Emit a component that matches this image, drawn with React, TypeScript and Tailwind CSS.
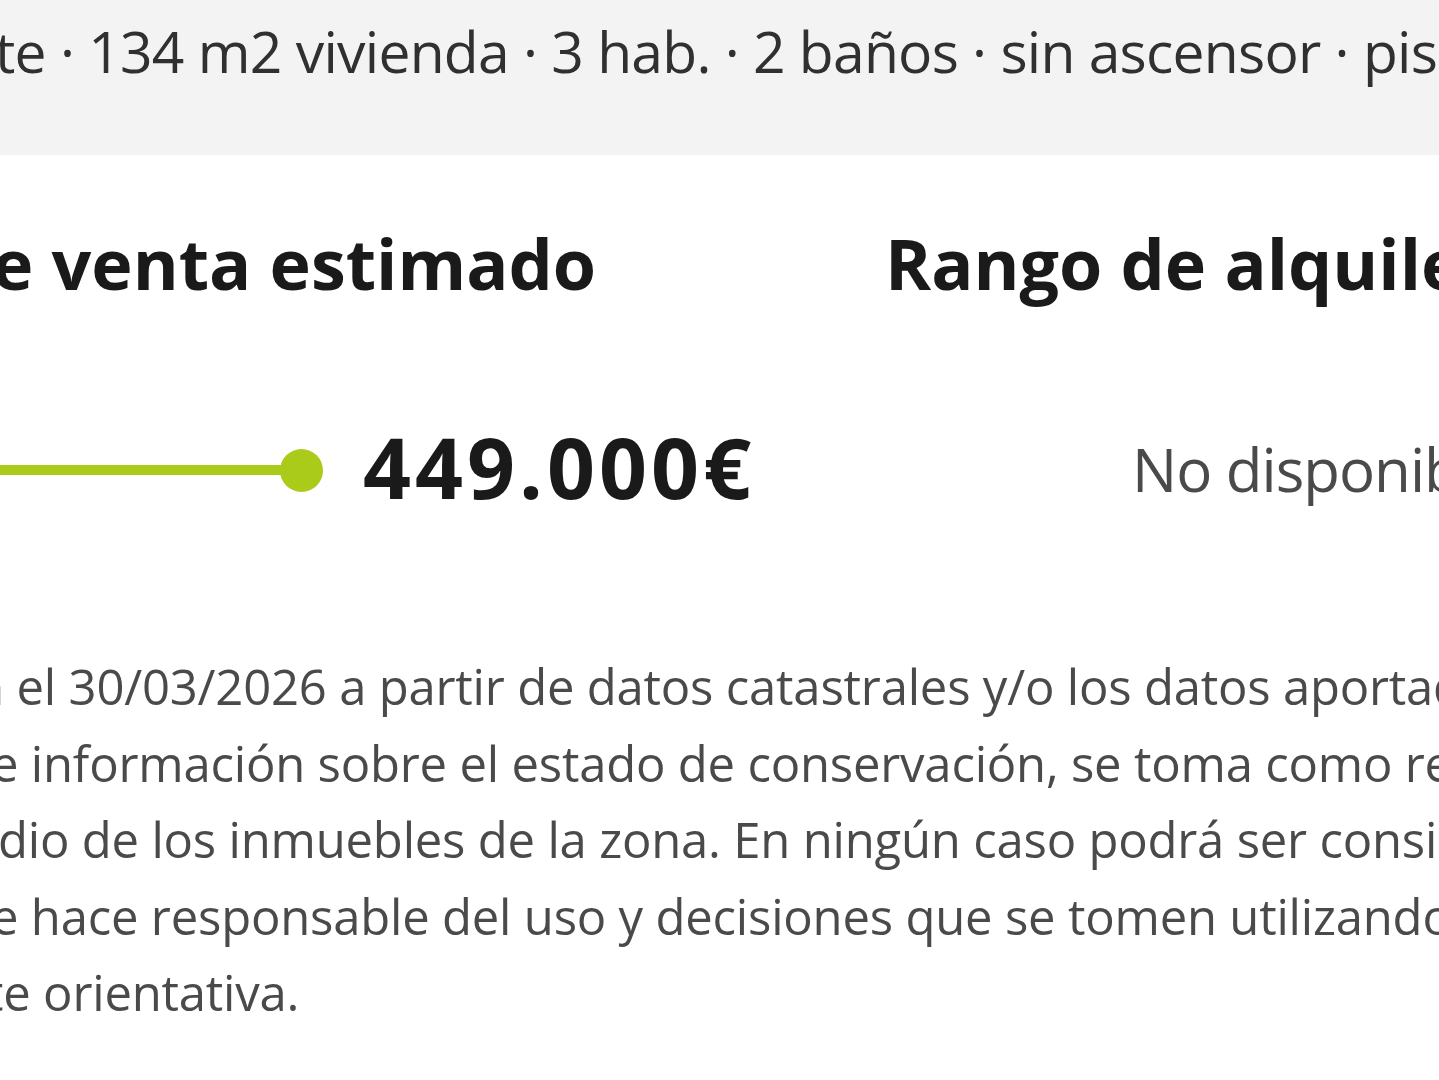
import React from "react";

const font = { fontFamily: '"Open Sans", "Noto Sans", sans-serif' };

const bodyLines = [
  { text: "a el 30/03/2026 a partir de datos catastrales y/o los datos aportados", ml: "-ml-[23px]" },
  { text: "e información sobre el estado de conservación, se toma como referencia", ml: "-ml-[9px]" },
  { text: "dio de los inmuebles de la zona. En ningún caso podrá ser considerada", ml: "-ml-[2px]" },
  { text: "e hace responsable del uso y decisiones que se tomen utilizando", ml: "-ml-[9px]" },
  { text: "te orientativa.", ml: "-ml-[14px]" },
];

export default function App() {
  return (
    <div
      className="w-[1439px] h-[1080px] overflow-hidden bg-white antialiased"
      style={font}
    >
      {/* property summary bar */}
      <div className="h-[155px] bg-[#f3f3f3] pt-[16px] overflow-hidden">
        <p className="-ml-[5px] whitespace-nowrap text-[57px] leading-[70px] text-[#303030] tracking-[-0.75px]">
          te · 134 m2 vivienda · 3 hab. · 2 baños · sin ascensor · piso 2
        </p>
      </div>

      {/* valuation columns */}
      <div className="flex overflow-hidden">
        <div className="w-[885px] shrink-0 overflow-hidden">
          <h2 className="mt-[68px] -ml-[8px] whitespace-nowrap text-[70px] leading-[80px] font-bold text-[#1a1a1a]">
            e venta estimado
          </h2>
          <div className="mt-[119px] flex items-center">
            <div className="mt-[6px] h-[10px] w-[300px] bg-[#abcb1b]" />
            <div className="mt-[6px] -ml-[20px] h-[43px] w-[43px] rounded-full bg-[#abcb1b]" />
            <span className="ml-[40px] whitespace-nowrap text-[84px] leading-[90px] font-bold text-[#1a1a1a] tracking-[4px]">
              449.000€
            </span>
          </div>
        </div>
        <div className="flex-1 overflow-hidden">
          <h2 className="mt-[68px] whitespace-nowrap text-[70px] leading-[80px] font-bold text-[#1a1a1a]">
            Rango de alquiler estimado
          </h2>
          <p className="mt-[121px] ml-[247px] whitespace-nowrap text-[60px] leading-[90px] text-[#4a4a4a] tracking-[-1px]">
            No disponible
          </p>
        </div>
      </div>

      {/* disclaimer */}
      <div className="mt-[134px] overflow-hidden">
        {bodyLines.map((line) => (
          <p
            key={line.text}
            className={`${line.ml} whitespace-nowrap text-[49px] leading-[76.5px] text-[#4a4a4a] tracking-[-0.2px]`}
          >
            {line.text}
          </p>
        ))}
      </div>
    </div>
  );
}
